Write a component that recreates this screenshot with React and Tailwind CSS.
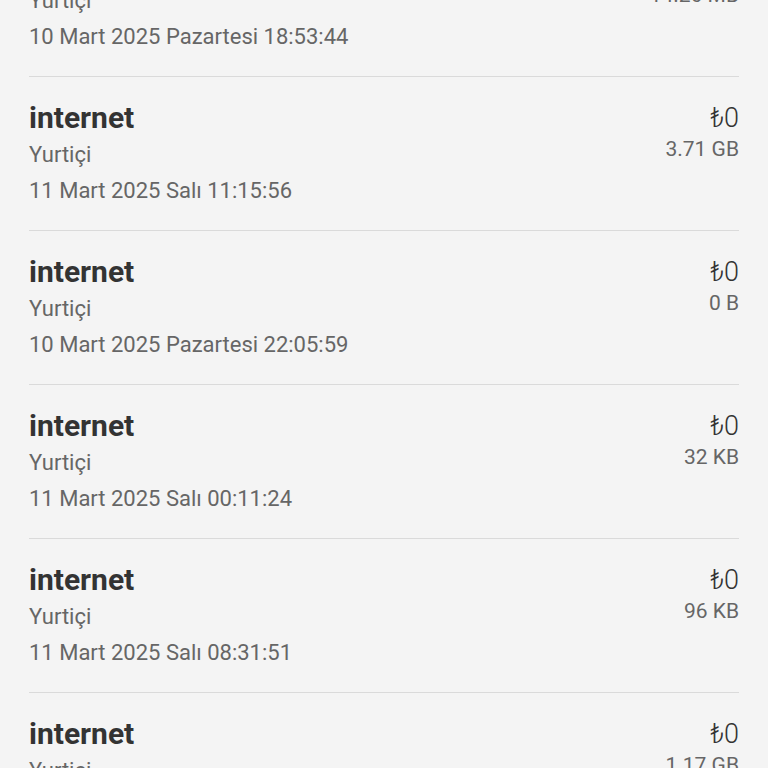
import React from "react";

const rows = [
  { date: "10 Mart 2025 Pazartesi 18:53:44", size: "14.26 MB" },
  { date: "11 Mart 2025 Salı 11:15:56", size: "3.71 GB" },
  { date: "10 Mart 2025 Pazartesi 22:05:59", size: "0 B" },
  { date: "11 Mart 2025 Salı 00:11:24", size: "32 KB" },
  { date: "11 Mart 2025 Salı 08:31:51", size: "96 KB" },
  { date: "11 Mart 2025 Salı 09:02:17", size: "1.17 GB" },
];

function UsageRow({ date, size }) {
  return (
    <div className="flex justify-between border-b border-[#dadada] pt-[23px] pb-[22px]">
      <div className="flex flex-col">
        <span className="text-[30px] font-bold leading-[36px] text-[#333333]">internet</span>
        <span className="text-[22px] leading-[37px] text-[#666666]">Yurtiçi</span>
        <span className="text-[22px] leading-[35px] text-[#666666]">{date}</span>
      </div>
      <div className="flex flex-col items-end">
        <span className="text-[27px] font-light leading-[36px] text-[#333333]">₺0</span>
        <span className="text-[21px] leading-[27px] text-[#666666]">{size}</span>
      </div>
    </div>
  );
}

export default function App() {
  return (
    <div
      className="h-screen overflow-hidden bg-[#f4f4f4] px-[29px]"
      style={{ fontFamily: "Roboto, 'Noto Sans', sans-serif" }}
    >
      <div className="-mt-[77px]">
        {rows.map((r, i) => (
          <UsageRow key={i} date={r.date} size={r.size} />
        ))}
      </div>
    </div>
  );
}
